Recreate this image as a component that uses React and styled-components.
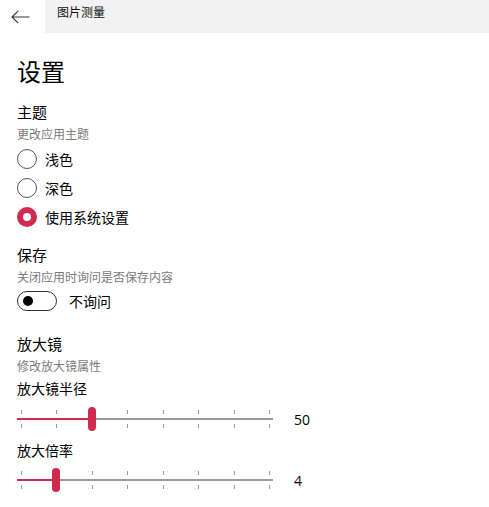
import React from "react";
import styled, { createGlobalStyle } from "styled-components";

const ACCENT = "#cf2a4f";

const Global = createGlobalStyle`
  html, body { margin: 0; padding: 0; background: #fff; }
  body {
    font-family: "Noto Sans", "Noto Sans CJK SC", sans-serif;
    color: #111;
    width: 489px;
    height: 507px;
    overflow: hidden;
  }
`;

const Page = styled.div`
  width: 489px;
  height: 507px;
  display: flex;
  flex-direction: column;
`;

const Header = styled.div`
  display: flex;
  height: 33px;
`;

const BackButton = styled.div`
  width: 45px;
  display: flex;
  align-items: center;
  justify-content: flex-start;
  padding-left: 11px;
  box-sizing: border-box;
`;

const TitleBar = styled.div`
  flex: 1;
  background: #f2f2f2;
  padding: 5px 0 0 12px;
  font-size: 12px;
  line-height: 16px;
  color: #111;
`;

const Content = styled.div`
  padding-left: 17px;
  display: flex;
  flex-direction: column;
`;

const Heading = styled.div`
  font-size: 24px;
  line-height: 32px;
  margin-top: 23px;
  color: #000;
`;

const SectionTitle = styled.div`
  font-size: 15px;
  line-height: 20px;
  margin-top: ${(p) => p.$mt}px;
  color: #000;
`;

const Desc = styled.div`
  font-size: 12px;
  line-height: 16px;
  margin-top: 5px;
  color: #7a7a7a;
`;

const RadioList = styled.div`
  margin-top: 1px;
  display: flex;
  flex-direction: column;
`;

const RadioRow = styled.div`
  height: 29px;
  display: flex;
  align-items: center;
  gap: 8px;
  font-size: 14px;
  color: #000;
`;

const RadioCircle = styled.span`
  width: 20px;
  height: 20px;
  box-sizing: border-box;
  border-radius: 50%;
  border: ${(p) => (p.$checked ? `6px solid ${ACCENT}` : "1.5px solid #555")};
  background: #fff;
  flex-shrink: 0;
`;

const ToggleRow = styled.div`
  margin-top: 1px;
  height: 28px;
  display: flex;
  align-items: center;
  gap: 12px;
  font-size: 14px;
  color: #000;
`;

const Toggle = styled.span`
  width: 40px;
  height: 20px;
  box-sizing: border-box;
  border: 1.5px solid #333;
  border-radius: 10px;
  display: flex;
  align-items: center;
  padding-left: 4.5px;
`;

const Knob = styled.span`
  width: 10px;
  height: 10px;
  border-radius: 50%;
  background: #000;
`;

const SliderLabel = styled.div`
  font-size: 14px;
  line-height: 20px;
  margin-top: ${(p) => p.$mt}px;
  color: #000;
`;

const SliderRow = styled.div`
  margin-top: ${(p) => p.$mt}px;
  height: 30px;
  display: flex;
  align-items: center;
  gap: 21px;
`;

const SliderTrackArea = styled.div`
  position: relative;
  width: 256px;
  height: 30px;
`;

const Track = styled.div`
  position: absolute;
  left: 0;
  right: 0;
  top: 14px;
  height: 2px;
  background: #999;
`;

const Fill = styled.div`
  position: absolute;
  left: 0;
  top: 14px;
  height: 2px;
  background: ${ACCENT};
`;

const Tick = styled.div`
  position: absolute;
  width: 1px;
  height: 4px;
  background: #999;
  top: ${(p) => (p.$below ? 20 : 6)}px;
`;

const Thumb = styled.div`
  position: absolute;
  top: 3px;
  width: 8px;
  height: 24px;
  margin-left: -4px;
  border-radius: 4px;
  background: ${ACCENT};
`;

const Value = styled.div`
  font-size: 14px;
  color: #000;
  font-family: "Segoe UI", "Open Sans", "Noto Sans", sans-serif;
`;

function Slider({ value, min, max, mt }) {
  const ticks = 8;
  const start = 4;
  const end = 252;
  const step = (end - start) / (ticks - 1);
  const x = start + ((value - min) / (max - min)) * (end - start);
  return (
    <SliderRow $mt={mt}>
      <SliderTrackArea>
        <Track />
        <Fill style={{ width: x }} />
        {Array.from({ length: ticks }).map((_, i) => (
          <React.Fragment key={i}>
            <Tick style={{ left: Math.round(start + i * step) }} />
            <Tick $below style={{ left: Math.round(start + i * step) }} />
          </React.Fragment>
        ))}
        <Thumb style={{ left: x }} />
      </SliderTrackArea>
      <Value>{value}</Value>
    </SliderRow>
  );
}

function BackArrow() {
  return (
    <svg width="19" height="14" viewBox="0 0 19 14" fill="none">
      <path d="M18.5 7H1.2M7.2 0.8L1 7l6.2 6.2" stroke="#333" strokeWidth="1.1" />
    </svg>
  );
}

export default function App() {
  return (
    <Page>
      <Global />
      <Header>
        <BackButton>
          <BackArrow />
        </BackButton>
        <TitleBar>图片测量</TitleBar>
      </Header>
      <Content>
        <Heading>设置</Heading>

        <SectionTitle $mt={14}>主题</SectionTitle>
        <Desc>更改应用主题</Desc>
        <RadioList>
          <RadioRow>
            <RadioCircle />
            浅色
          </RadioRow>
          <RadioRow>
            <RadioCircle />
            深色
          </RadioRow>
          <RadioRow>
            <RadioCircle $checked />
            使用系统设置
          </RadioRow>
        </RadioList>

        <SectionTitle $mt={14}>保存</SectionTitle>
        <Desc>关闭应用时询问是否保存内容</Desc>
        <ToggleRow>
          <Toggle>
            <Knob />
          </Toggle>
          不询问
        </ToggleRow>

        <SectionTitle $mt={19}>放大镜</SectionTitle>
        <Desc>修改放大镜属性</Desc>
        <SliderLabel $mt={4}>放大镜半径</SliderLabel>
        <Slider value={50} min={30} max={100} mt={5} />
        <SliderLabel $mt={7}>放大倍率</SliderLabel>
        <Slider value={4} min={3} max={10} mt={4} />
      </Content>
    </Page>
  );
}
